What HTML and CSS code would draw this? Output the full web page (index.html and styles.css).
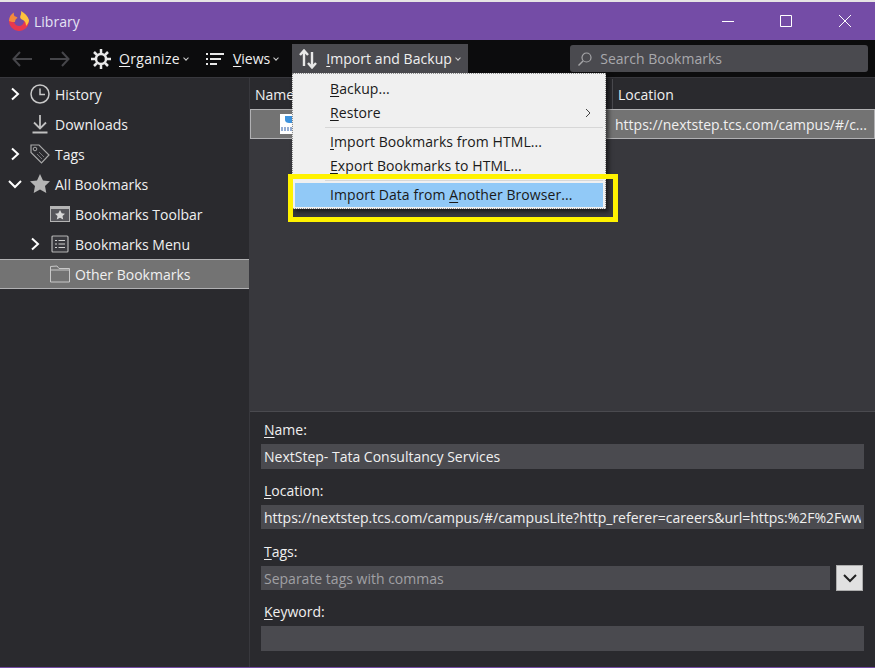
FILE: index.html
```html
<!DOCTYPE html>
<html lang="en">
<head>
  <meta charset="UTF-8" />
  <title>Library</title>
  <link rel="stylesheet" href="styles.css">
</head>
<body>
  <header class="titlebar">
    <svg class="logo" viewBox="0 0 20 20" width="20" height="20">
      <path d="M2.500 9.500a7.500 7.500 0 0 0 15 1" fill="none" stroke="#e8384f" stroke-width="5"/>
      <path fill="#f58a3c" d="M0 10C0 6 2 3 5 1.500c-.5 2 0 3 1 4 1 0 2 .5 2.500 1.500C6.500 8 6 9.500 6 11c-2 0-4 0-6-1z"/>
      <path fill="#ffc23c" d="M12 0c3.500 2 7 5 8 9 0 2-1 4-3 6 0-3-1-5-3-6-2.500-1-3.500-2.500-2.500-4.500.7-1.500.8-3 .5-4.500z"/>
    </svg>
    <span class="title">Library</span>
    <div class="window-controls">
      <svg viewBox="0 0 12 12" width="12" height="12"><path d="M0 6.500h12" stroke="#fff" fill="none"/></svg>
      <svg viewBox="0 0 12 12" width="12" height="12"><path d="M.5.5h11v11H.5z" stroke="#fff" fill="none"/></svg>
      <svg class="close" viewBox="0 0 12 12" width="12" height="12"><path d="M0 0l12 12M12 0L0 12" stroke="#fff" fill="none"/></svg>
    </div>
  </header>

  <nav class="toolbar">
    <svg class="nav-arrow" viewBox="0 0 20 16" width="20" height="16"><path d="M20 8H2M8 1L1.500 8 8 15" fill="none" stroke="#46464a" stroke-width="2"/></svg>
    <svg class="nav-arrow" viewBox="0 0 20 16" width="20" height="16"><path d="M0 8h18M12 1l6.500 7L12 15" fill="none" stroke="#46464a" stroke-width="2"/></svg>
    <button class="tool tool-organize">
      <svg viewBox="0 0 20 20" width="20" height="20"><circle cx="10" cy="10" r="5" fill="none" stroke="#e8e8e8" stroke-width="2.500"/><path d="M10 0v4M10 16v4M0 10h4M16 10h4M3 3l3 3M14 14l3 3M17 3l-3 3M6 14l-3 3" stroke="#e8e8e8" stroke-width="2.500"/></svg>
      <span><u>O</u>rganize</span><i class="caret"></i>
    </button>
    <button class="tool tool-views">
      <svg viewBox="0 0 18 12" width="18" height="12"><path d="M0 1h2M4 1h14M0 6h2M4 6h11M0 11h2M4 11h7" stroke="#e8e8e8" stroke-width="2"/></svg>
      <span><u>V</u>iews</span><i class="caret"></i>
    </button>
    <button class="tool tool-import">
      <svg viewBox="0 0 18 20" width="18" height="20"><path d="M5 17V2M1 6l4-4.500L9 6M13 3v15M9 14l4 4.500 4-4.500" fill="none" stroke="#e8e8e8" stroke-width="2.400"/></svg>
      <span><u>I</u>mport and Backup</span><i class="caret"></i>
    </button>
    <div class="search">
      <svg viewBox="0 0 14 14" width="14" height="14"><circle cx="8.500" cy="5.500" r="4.500" fill="none" stroke="#a5a5a8" stroke-width="1.200"/><path d="M5 9l-4.500 4.500" stroke="#a5a5a8" stroke-width="1.400"/></svg>
      <span>Search Bookmarks</span>
    </div>
  </nav>

  <main class="panes">
    <aside class="sidebar">
      <div class="tree-row">
        <svg class="twisty" viewBox="0 0 10 14" width="10" height="14"><path d="M2 1.500L8 7l-6 5.500" fill="none" stroke="#fff" stroke-width="2"/></svg>
        <svg class="tree-icon" viewBox="0 0 20 20" width="20" height="20"><circle cx="10" cy="10" r="9" fill="none" stroke="#c8c8c8" stroke-width="1.500"/><path d="M10 4.500V10.500H15" fill="none" stroke="#c8c8c8" stroke-width="1.500"/></svg>
        <span>History</span>
      </div>
      <div class="tree-row">
        <span class="twisty-space"></span>
        <svg class="tree-icon" viewBox="0 0 20 20" width="20" height="20"><path d="M10 1v13M4 8.500l6 6 6-6M2.500 18.500h15" fill="none" stroke="#c0c0c0" stroke-width="1.800"/></svg>
        <span>Downloads</span>
      </div>
      <div class="tree-row">
        <svg class="twisty" viewBox="0 0 10 14" width="10" height="14"><path d="M2 1.500L8 7l-6 5.500" fill="none" stroke="#fff" stroke-width="2"/></svg>
        <svg class="tree-icon" viewBox="0 0 20 20" width="20" height="20"><path d="M1 1h8l10 10-7.500 8L1 8.500z" fill="#2a2a2e" stroke="#a8a8a8" stroke-width="1.200"/><circle cx="5" cy="5" r="1.800" fill="none" stroke="#a8a8a8"/><path d="M9 8l5 5M7 10l5 5" stroke="#77777a"/></svg>
        <span>Tags</span>
      </div>
      <div class="tree-row">
        <svg class="twisty" viewBox="0 0 14 10" width="14" height="10"><path d="M1 2l6 6 6-6" fill="none" stroke="#fff" stroke-width="2"/></svg>
        <svg class="tree-icon" viewBox="0 0 20 20" width="20" height="20"><path d="M10 0l3 6.500 7 .8-5 4.700 1.300 7L10 15.500 3.700 19 5 12 0 7.300l7-.8z" fill="#b4b4b4"/></svg>
        <span>All Bookmarks</span>
      </div>
      <div class="tree-row child-row">
        <span class="twisty-space"></span>
        <svg class="tree-icon" viewBox="0 0 20 16" width="20" height="16"><rect x=".5" y=".5" width="19" height="15" fill="#55555a" stroke="#b4b4b4"/><path d="M1 1h18v2H1z" fill="#b4b4b4"/><path d="M10 4l1.700 3.300 3.300.4-2.500 2.300.7 3.500-3.200-1.800-3.200 1.800.7-3.500L5 7.700l3.300-.4z" fill="#d8d8d8"/></svg>
        <span>Bookmarks Toolbar</span>
      </div>
      <div class="tree-row child-row">
        <svg class="twisty" viewBox="0 0 10 14" width="10" height="14"><path d="M2 1.500L8 7l-6 5.500" fill="none" stroke="#fff" stroke-width="2"/></svg>
        <svg class="tree-icon" viewBox="0 0 20 18" width="20" height="18"><rect x="2" y="1" width="16" height="16" rx="1" fill="#38383d" stroke="#b4b4b4" stroke-width="1.200"/><path d="M5 5.500h2M8.500 5.500H15M5 9h2M8.500 9H15M5 12.500h2M8.500 12.500H15" stroke="#d0d0d0"/></svg>
        <span>Bookmarks Menu</span>
      </div>
      <div class="tree-row child-row selected">
        <span class="twisty-space"></span>
        <svg class="tree-icon" viewBox="0 0 20 18" width="20" height="18"><path d="M.5 1.500V17h19V3.500H9L7 1z" fill="#737373" stroke="#c8c8c8"/><path d="M1 5h18" stroke="#c8c8c8"/></svg>
        <span>Other Bookmarks</span>
      </div>
    </aside>

    <section class="content">
      <div class="places">
        <div class="columns">
          <div class="col col-name">Name</div>
          <div class="col col-location">Location</div>
        </div>
        <div class="bookmark-row">
          <div class="cell-name">
            <svg class="favicon" viewBox="0 0 16 20" width="16" height="20"><rect width="16" height="20" fill="#fff"/><path d="M5 2h9v7H9C7 9 5 8 5 6z" fill="#3f94de"/><path d="M1 14h2M4 14h2M7 14h2M10 14h2M1 16h2M4 16h2M7 16h2M10 16h2" stroke="#2a5ca8"/></svg>
          </div>
          <div class="cell-location">https://nextstep.tcs.com/campus/#/c...</div>
        </div>
      </div>

      <form class="details">
        <div class="field">
          <label><u>N</u>ame:</label>
          <input class="tall" type="text" value="NextStep- Tata Consultancy Services">
        </div>
        <div class="field">
          <label><u>L</u>ocation:</label>
          <input type="text" value="https://nextstep.tcs.com/campus/#/campusLite?http_referer=careers&amp;url=https:%2F%2Fwww.tcs.com">
        </div>
        <div class="field">
          <label class="tags-label"><u>T</u>ags:</label>
          <div class="tags-row">
            <input type="text" placeholder="Separate tags with commas">
            <button type="button" class="tags-toggle">
              <svg viewBox="0 0 14 9" width="14" height="9"><path d="M1 1l6 6 6-6" fill="none" stroke="#222" stroke-width="2"/></svg>
            </button>
          </div>
        </div>
        <div class="field">
          <label><u>K</u>eyword:</label>
          <input class="tall" type="text">
        </div>
      </form>
    </section>
  </main>

  <div class="menu">
    <div class="menu-item"><u>B</u>ackup...</div>
    <div class="menu-item"><u>R</u>estore
      <svg class="submenu-arrow" viewBox="0 0 6 10" width="6" height="10"><path d="M1 1l4 4-4 4" fill="none" stroke="#444"/></svg>
    </div>
    <div class="menu-sep"></div>
    <div class="menu-item"><u>I</u>mport Bookmarks from HTML...</div>
    <div class="menu-item"><u>E</u>xport Bookmarks to HTML...</div>
    <div class="menu-sep"></div>
    <div class="menu-item active">Import Data from <u>A</u>nother Browser...</div>
  </div>
  <div class="callout"></div>
</body>
</html>
```

FILE: styles.css
```css
* {
  box-sizing: border-box;
}

body {
  margin: 0;
  height: 100vh;
  display: flex;
  flex-direction: column;
  overflow: hidden;
  font-family: "Open Sans", sans-serif;
  font-size: 14px;
  color: #f0f0f0;
  background: #2a2a2e;
  border-top: 2px solid #e6e4e4;
  border-bottom: 1px solid #744ca6;
}

u {
  text-underline-offset: 2px;
}

.titlebar {
  height: 38px;
  flex: none;
  display: flex;
  align-items: center;
  padding-left: 9px;
  background: #744ca6;
  color: #e4e4f4;
}

.title {
  margin-left: 5px;
}

.window-controls {
  margin-left: auto;
  margin-right: 24px;
  display: flex;
  gap: 46px;
}

.window-controls .close {
  margin-left: 1px;
}

.toolbar {
  height: 38px;
  flex: none;
  display: flex;
  align-items: center;
  padding-left: 12px;
  background: #0c0c0d;
  border-bottom: 1px solid #38383d;
}

.nav-arrow {
  margin-right: 18px;
}

.tool {
  height: 29px;
  display: flex;
  align-items: center;
  padding: 0;
  border: 0;
  background: none;
  color: #f0f0f0;
  font: inherit;
}

.tool-organize {
  margin-left: 3px;
}

.tool-organize span {
  margin-left: 8px;
  letter-spacing: 0.3px;
}

.tool-views {
  margin-left: 18px;
}

.tool-views span {
  margin-left: 9px;
}

.tool-import {
  margin-left: 14px;
  width: 176px;
  padding-left: 7px;
  background: #4a4a4f;
  align-self: flex-start;
  margin-top: 4px;
}

.tool-import span {
  margin-left: 9px;
  letter-spacing: 0.05px;
}

.caret {
  width: 4px;
  height: 4px;
  margin: 0 0 2px 4px;
  border-right: 1px solid #d0d0d0;
  border-bottom: 1px solid #d0d0d0;
  transform: rotate(45deg);
}

.search {
  width: 298px;
  height: 27px;
  margin-left: 102px;
  display: flex;
  align-items: center;
  gap: 8px;
  padding-left: 8px;
  background: #4a4a4f;
  border-radius: 3px;
  color: #a8a8ac;
}

.panes {
  flex: 1;
  display: flex;
  min-height: 0;
}

.sidebar {
  width: 250px;
  flex: none;
  padding-top: 1px;
  background: #2a2a2e;
  border-right: 1px solid #38383d;
}

.tree-row {
  height: 30px;
  display: flex;
  align-items: center;
  padding-left: 8px;
}

.tree-row .twisty {
  flex: none;
}

.twisty {
  width: 14px;
}

.twisty-space {
  width: 14px;
  flex: none;
}

.tree-icon {
  flex: none;
  margin: 0 5px 0 8px;
}

.child-row {
  padding-left: 28px;
}

.selected {
  background: #737373;
  border-top: 1px solid #b1b1b3;
  border-bottom: 1px solid #b1b1b3;
}

.content {
  flex: 1;
  display: flex;
  flex-direction: column;
  min-width: 0;
}

.places {
  flex: 1;
  background: #38383d;
}

.columns {
  height: 31px;
  display: flex;
  align-items: center;
  padding-top: 1px;
  background: #2a2a2e;
}

.col {
  height: 100%;
  display: flex;
  align-items: center;
  padding-left: 5px;
}

.col-name {
  width: 363px;
  border-right: 1px solid #4a4a4f;
}

.bookmark-row {
  height: 30px;
  display: flex;
  align-items: center;
  background: #737373;
  border: 1px solid #b1b1b3;
}

.cell-name {
  width: 364px;
  padding-left: 29px;
  display: flex;
}

.cell-location {
  flex: 1;
}

.details {
  flex: none;
  height: 256px;
  padding: 8px 11px 0;
  background: #2a2a2e;
  border-top: 1px solid #4a4a4f;
  display: flex;
  flex-direction: column;
  gap: 12px;
}

.field label {
  display: block;
  height: 21px;
  line-height: 20px;
  padding-left: 3px;
  margin-bottom: 3px;
}

.field .tags-label {
  line-height: 22px;
  margin-bottom: 4px;
}

.field input {
  display: block;
  width: 603px;
  height: 24px;
  padding: 0 3px;
  border: 0;
  outline: 0;
  background: #4a4a4f;
  color: #f0f0f0;
  font: inherit;
}

.field input.tall {
  height: 25px;
}

.field input::placeholder {
  color: #a0a0a4;
  opacity: 1;
}

.tags-row {
  display: flex;
  align-items: center;
  height: 24px;
}

.tags-row input {
  width: 569px;
}

.tags-toggle {
  width: 27px;
  height: 26px;
  margin-left: 6px;
  padding: 0;
  display: flex;
  align-items: center;
  justify-content: center;
  background: #e1e1e1;
  border: 1px solid #adadad;
}

.menu {
  position: absolute;
  left: 292px;
  top: 73px;
  width: 314px;
  height: 136px;
  padding: 3px 2px 0;
  background: #f0f0f0;
  border: 1px dotted #8a8a8a;
  color: #1a1a1a;
  letter-spacing: 0.07px;
  box-shadow: 3px 3px 4px rgba(0, 0, 0, 0.5);
}

.menu-item {
  position: relative;
  height: 24px;
  line-height: 24px;
  padding-left: 35px;
}

.menu-item.active {
  background: #91c9f7;
}

.submenu-arrow {
  position: absolute;
  right: 12px;
  top: 7px;
}

.menu-sep {
  height: 5px;
  margin: 0 0 0 30px;
  border-bottom: 1px solid #d7d7d7;
  transform: translateY(-2px);
}

.callout {
  position: absolute;
  left: 288px;
  top: 174px;
  width: 330px;
  height: 48px;
  border: 5px solid #fff200;
}
```
